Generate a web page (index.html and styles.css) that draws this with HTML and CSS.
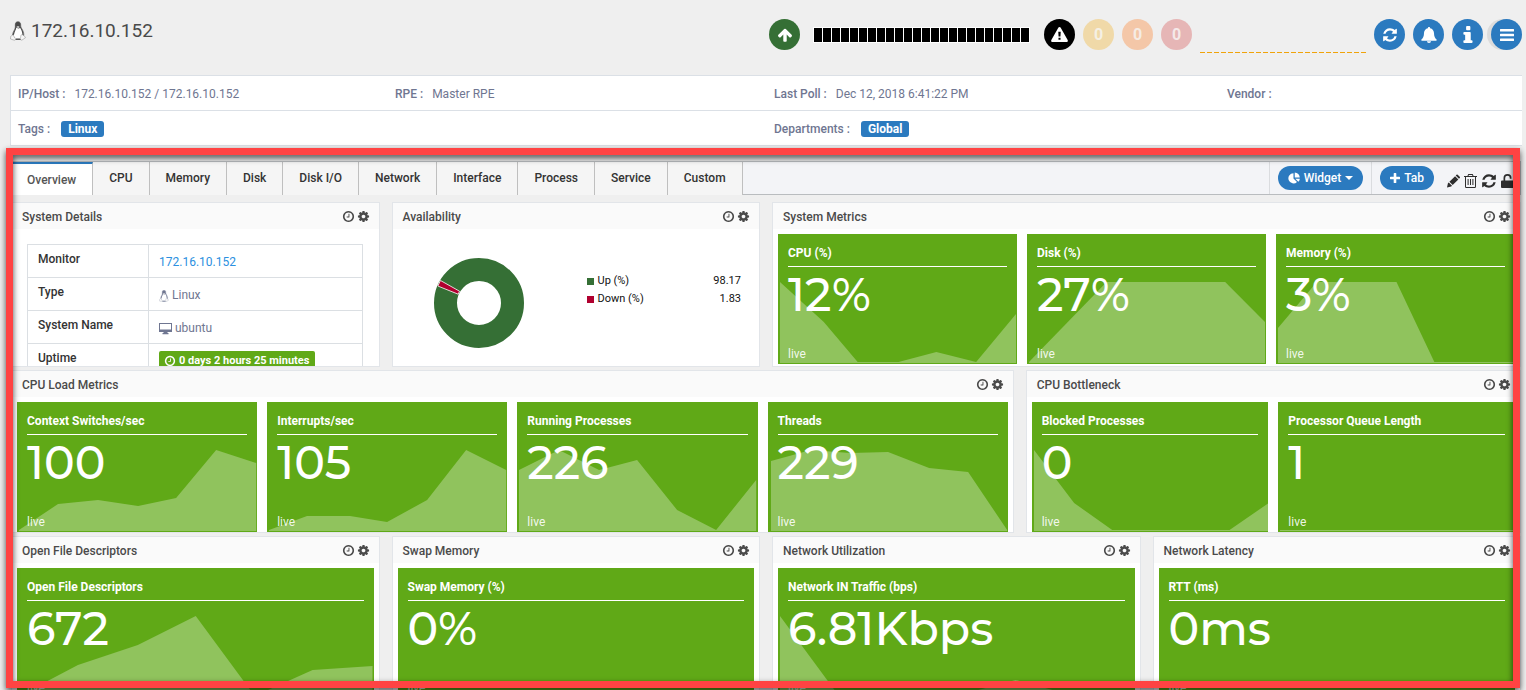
FILE: index.html
```
<!DOCTYPE html>
<html lang="en">
<head>
<meta charset="utf-8">
<title>172.16.10.152</title>
<link rel="stylesheet" href="styles.css">
</head>
<body>
<svg class="sprite" aria-hidden="true">
  <symbol id="clock" viewBox="0 0 1792 1792"><path d="M1024 544v448q0 14-9 23t-23 9h-320q-14 0-23-9t-9-23v-64q0-14 9-23t23-9h224v-352q0-14 9-23t23-9h64q14 0 23 9t9 23zm416 352q0-148-73-273t-198-198-273-73-273 73-198 198-73 273 73 273 198 198 273 73 273-73 198-198 73-273zm224 0q0 209-103 385.500t-279.500 279.500-385.500 103-385.500-103-279.500-279.500-103-385.500 103-385.500 279.500-279.500 385.500-103 385.500 103 279.500 279.500 103 385.500z"/></symbol>
  <symbol id="cog" viewBox="0 0 1792 1792"><path d="M1152 896q0-106-75-181t-181-75-181 75-75 181 75 181 181 75 181-75 75-181zm512-109v222q0 12-8 23t-20 13l-185 28q-19 54-39 91 35 50 107 138 10 12 10 25t-9 23q-27 37-99 108t-94 71q-12 0-26-9l-138-108q-44 23-91 38-16 136-29 186-7 28-36 28h-222q-14 0-24.500-8.500t-11.500-21.500l-28-184q-49-16-90-37l-141 107q-10 9-25 9-14 0-25-11-126-114-165-168-7-10-7-23 0-12 8-23 15-21 51-66.500t54-70.500q-27-50-41-99l-183-27q-13-2-21-12.500t-8-23.500v-222q0-12 8-23t19-13l186-28q14-46 39-92-40-57-107-138-10-12-10-24 0-10 9-23 26-36 98.500-107.500t94.500-71.500q13 0 26 10l138 107q44-23 91-38 16-136 29-186 7-28 36-28h222q14 0 24.500 8.500t11.500 21.500l28 184q49 16 90 37l142-107q9-9 24-9 13 0 25 10 129 119 165 170 7 8 7 22 0 12-8 23-15 21-51 66.500t-54 70.500q26 50 41 98l183 28q13 2 21 12.500t8 23.500z"/></symbol>
  <symbol id="refresh" viewBox="0 0 1792 1792"><path d="M1639 1056q0 5-1 7-64 268-268 434.500t-478 166.500q-146 0-282.500-55t-243.500-157l-129 129q-19 19-45 19t-45-19-19-45v-448q0-26 19-45t45-19h448q26 0 45 19t19 45-19 45l-137 137q71 66 161 102t187 36q134 0 250-65t186-179q11-17 53-117 8-23 30-23h192q13 0 22.500 9.500t9.500 22.500zm25-800v448q0 26-19 45t-45 19h-448q-26 0-45-19t-19-45 19-45l138-138q-148-137-349-137-134 0-250 65t-186 179q-11 17-53 117-8 23-30 23h-199q-13 0-22.500-9.500t-9.500-22.500v-7q65-268 270-434.500t480-166.500q146 0 284 55.500t245 156.500l130-129q19-19 45-19t45 19 19 45z"/></symbol>
  <symbol id="up" viewBox="0 0 1792 1792"><path d="M1675 971q0 51-37 90l-75 75q-38 38-91 38-54 0-90-38l-294-293v704q0 52-37.500 84.500t-90.500 32.500h-128q-53 0-90.500-32.500t-37.500-84.500v-704l-294 293q-36 38-90 38t-90-38l-75-75q-38-38-38-90 0-53 38-91l651-651q35-37 90-37 54 0 91 37l651 651q37 39 37 91z"/></symbol>
  <symbol id="warn" viewBox="0 0 18 16"><path fill-rule="evenodd" d="M9 0c.6 0 1 .3 1.300.8l7.400 13c.6 1.100-.1 2.200-1.200 2.200h-15c-1.100 0-1.800-1.100-1.200-2.200l7.400-13C8 .3 8.400 0 9 0zM7.700 5l.3 5.200h2l.3-5.200zM7.900 11.500v2.100h2.200v-2.100z"/></symbol>
  <symbol id="bell" viewBox="0 0 16 16"><path d="M8 0c.7 0 1.100.5 1.100 1.200 2.400.5 3.900 2.400 3.900 4.900 0 3.400 1 5.300 2.600 6.400.3.800-.2 1.300-.8 1.300H1.200c-.6 0-1.100-.5-.8-1.300C2 11.400 3 9.500 3 6.100c0-2.500 1.500-4.400 3.900-4.900C6.900.5 7.300 0 8 0zM6 14.300h4c0 1-.9 1.700-2 1.700s-2-.7-2-1.700z"/></symbol>
  <symbol id="info" viewBox="0 0 10 18"><path d="M3 1c0-.6.300-1 .9-1h2.700c.6 0 .9.400.9 1v2.400c0 .6-.3 1-.9 1H3.900c-.6 0-.9-.4-.9-1zM1 6.300h6c.6 0 .9.300.9.900v7.800h1c.6 0 .9.400.9 1v1c0 .6-.3 1-.9 1H1c-.6 0-.9-.4-.9-1v-1c0-.6.300-1 .9-1h1V9.300H1c-.6 0-.9-.4-.9-1V7.200c0-.6.300-.9.900-.9z"/></symbol>
  <symbol id="menu" viewBox="0 0 14 12"><path d="M.5 0h13q.5 0 .5.500v1.500q0 .5-.5.500H.5Q0 2.500 0 2V.5Q0 0 .5 0zM.5 4.700h13q.5 0 .5.500v1.500q0 .5-.5.500H.5Q0 7.200 0 6.700V5.200q0-.5.500-.5zM.5 9.500h13q.5 0 .5.500v1.500q0 .5-.5.500H.5Q0 12 0 11.500V10q0-.5.500-.5z"/></symbol>
  <symbol id="pie" viewBox="0 0 16 16"><path d="M7.300 1.800v6.700l4.700 4.700A6.700 6.700 0 1 1 7.300 1.800zM9 .5A6.800 6.800 0 0 1 15.700 7.300H9zM9.700 8.900h6.100a6.700 6.700 0 0 1-2 4.200z"/></symbol>
  <symbol id="plus" viewBox="0 0 10 10"><path d="M3.700.6q0-.6.600-.6h1.400q.6 0 .6.600v3.100h3.100q.6 0 .6.600v1.400q0 .6-.6.600H6.300v3.100q0 .6-.6.600H4.300q-.6 0-.6-.6V6.300H.6Q0 6.300 0 5.700V4.300q0-.6.600-.6h3.100z"/></symbol>
  <symbol id="caret" viewBox="0 0 8 4"><path d="M0 0h8L4 4z"/></symbol>
  <symbol id="pencil" viewBox="0 0 14 14"><path d="M0 14l1-4.500.9-.9 3.500 3.500-.9.900zM2.600 7.900L8.700 1.800l3.500 3.500-6.100 6.100zM9.400 1.100l.8-.8q.7-.6 1.300 0l2.200 2.200q.6.600 0 1.300l-.8.800z"/></symbol>
  <symbol id="trash" viewBox="0 0 13 14"><path fill-rule="evenodd" d="M4.300 0h4.400l.9 2H13v1h-1v9.500q0 1.500-1.300 1.500H2.300Q1 14 1 12.500V3H0V2h3.400zM4.900 1l-.4 1h4l-.4-1zM2 3v9.500q0 .5.500.5h8q.5 0 .5-.5V3zM3.600 5h1v6h-1zM6 5h1v6H6zM8.400 5h1v6h-1z"/></symbol>
  <symbol id="unlock" viewBox="0 0 13 14"><path d="M2.500 6.500V4a4 4 0 0 1 8 0v.8H8.800V4a2.300 2.300 0 0 0-4.600 0v2.500H12q1 0 1 1V13q0 1-1 1H1q-1 0-1-1V7.500q0-1 1-1z"/></symbol>
  <symbol id="tux" viewBox="0 0 16 19"><path d="M5.300 3.500C5.200 1.300 6.300.2 8 .2s2.900 1.200 2.700 3.500c0 2 .9 3.200 1.900 5 1 1.600 1.500 3.500.9 6L11 18H5l-2.500-4.500c.1-2 1.200-3.700 2-5.300.7-1.200.9-2.600.8-4.700z" fill="#fff" stroke="currentColor" stroke-width=".6"/><path d="M5.200 3.500C5.100 1.300 6.300.2 8 .2s2.900 1.200 2.700 3.500l.1 1.800c.6 1.600 2.900 3.900 2.900 8l-1.300.3c.1-3.200-1-5.400-2.200-7.400L8.300 6.900 6.300 6.200C6 8.500 4.300 10.500 4 13.300l-1.300.2c-.1-2.800 2.400-5 2.500-7.500zM5.300 18.300l.8-1.200h3.700l1 1.200z" fill="currentColor"/><path d="M6.200 5.400L8 4.600l1.800.8L8.100 6.600z" fill="#ddd"/><path d="M2.900 13.200l2.700 4.200c.3 1-.6 1.500-1.700 1.200L.5 17.500l.2-2.600zM12.100 13l2.700 1.900.6 1.400-3.200 2.100c-1 .5-1.800.1-1.800-.8l.5-3.900z" fill="#f6f6f6" stroke="currentColor" stroke-width=".5" stroke-opacity=".6"/></symbol>
  <symbol id="screen" viewBox="0 0 13 12"><path fill-rule="evenodd" d="M0 0h13v9H8.500v1h1v1.200h-6V10h1V9H0zM1 1v5.500h11V1z"/></symbol>
</svg>

<div class="page">
  <header class="topbar">
    <h1 class="host"><svg class="tux-lg"><use href="#tux"/></svg>172.16.10.152</h1>
    <div class="status">
      <span class="dot dot-up"><svg class="i16"><use href="#up"/></svg></span>
      <span class="poll-bar"></span>
      <span class="dot dot-alert"><svg class="warn"><use href="#warn"/></svg></span>
      <span class="dot dot-yellow">0</span>
      <span class="dot dot-orange">0</span>
      <span class="dot dot-red">0</span>
      <span class="trend"></span>
      <button class="dot dot-blue" aria-label="Refresh"><svg class="i16"><use href="#refresh"/></svg></button>
      <button class="dot dot-blue" aria-label="Alerts"><svg class="i16"><use href="#bell"/></svg></button>
      <button class="dot dot-blue" aria-label="Information"><svg class="info"><use href="#info"/></svg></button>
      <button class="dot dot-blue dot-menu" aria-label="Menu"><svg class="menu"><use href="#menu"/></svg></button>
    </div>
  </header>

  <section class="details">
    <div class="details-row">
      <div><b>IP/Host :</b><span>172.16.10.152 / 172.16.10.152</span></div>
      <div><b>RPE :</b><span>Master RPE</span></div>
      <div><b>Last Poll :</b><span>Dec 12, 2018 6:41:22 PM</span></div>
      <div><b>Vendor :</b></div>
    </div>
    <div class="details-row">
      <div class="span2"><b>Tags :</b><span class="tag">Linux</span></div>
      <div class="span2"><b>Departments :</b><span class="tag">Global</span></div>
    </div>
  </section>

  <main class="dashboard">
    <nav class="tabs">
      <button class="tab active">Overview</button>
      <button class="tab">CPU</button>
      <button class="tab">Memory</button>
      <button class="tab">Disk</button>
      <button class="tab">Disk I/O</button>
      <button class="tab">Network</button>
      <button class="tab">Interface</button>
      <button class="tab">Process</button>
      <button class="tab">Service</button>
      <button class="tab">Custom</button>
      <div class="tools">
        <div class="tool"><button class="pill"><svg class="i12"><use href="#pie"/></svg>Widget<svg class="caret"><use href="#caret"/></svg></button></div>
        <div class="tool"><button class="pill"><svg class="plus"><use href="#plus"/></svg>Tab</button>
          <div class="tool-icons">
            <button class="icon" aria-label="Edit"><svg class="i14"><use href="#pencil"/></svg></button>
            <button class="icon" aria-label="Delete"><svg class="i14"><use href="#trash"/></svg></button>
            <button class="icon" aria-label="Reload"><svg class="i16"><use href="#refresh"/></svg></button>
            <button class="icon" aria-label="Unlock"><svg class="i14"><use href="#unlock"/></svg></button>
          </div>
        </div>
      </div>
    </nav>

    <div class="grid">
      <section class="widget w3 first-row">
        <header class="widget-head"><h2>System Details</h2><button class="icon" aria-label="Time range"><svg class="i13"><use href="#clock"/></svg></button><button class="icon" aria-label="Settings"><svg class="i13"><use href="#cog"/></svg></button></header>
        <div class="facts-box">
          <table class="facts">
            <tr><th scope="row">Monitor</th><td><a href="#">172.16.10.152</a></td></tr>
            <tr><th scope="row">Type</th><td><svg class="tux-sm"><use href="#tux"/></svg>Linux</td></tr>
            <tr><th scope="row">System Name</th><td><svg class="screen"><use href="#screen"/></svg>ubuntu</td></tr>
            <tr><th scope="row">Uptime</th><td><span class="uptime"><svg class="i12"><use href="#clock"/></svg>0 days 2 hours 25 minutes</span></td></tr>
          </table>
        </div>
      </section>

      <section class="widget w3 first-row">
        <header class="widget-head"><h2>Availability</h2><button class="icon" aria-label="Time range"><svg class="i13"><use href="#clock"/></svg></button><button class="icon" aria-label="Settings"><svg class="i13"><use href="#cog"/></svg></button></header>
        <div class="availability">
          <svg class="donut" viewBox="0 0 90 90"><circle cx="45" cy="45" r="33.500" fill="none" stroke="#356f35" stroke-width="23"/><path d="M6.500 22.500L25.500 33.200 24.200 36.200 3.800 28z" fill="#b0002f" stroke="#fff" stroke-width=".8"/></svg>
          <ul class="legend">
            <li><i class="key key-up"></i>Up (%)<span>98.17</span></li>
            <li><i class="key key-down"></i>Down (%)<span>1.83</span></li>
          </ul>
        </div>
      </section>

      <section class="widget w6 first-row">
        <header class="widget-head"><h2>System Metrics</h2><button class="icon" aria-label="Time range"><svg class="i13"><use href="#clock"/></svg></button><button class="icon" aria-label="Settings"><svg class="i13"><use href="#cog"/></svg></button></header>
        <div class="tiles">
          <article class="tile"><svg class="chart" viewBox="0 0 240 130" preserveAspectRatio="none"><path d="M2 129V48L46 88 80 128H121L159 118 199 128 239 80V129z"/></svg><h3>CPU (%)</h3><p class="value">12%</p><p class="live">live</p></article>
          <article class="tile"><svg class="chart" viewBox="0 0 240 130" preserveAspectRatio="none"><path d="M2 129V128L80 48H199L239 88V129z"/></svg><h3>Disk (%)</h3><p class="value">27%</p><p class="live">live</p></article>
          <article class="tile"><svg class="chart" viewBox="0 0 240 130" preserveAspectRatio="none"><path d="M2 129V94L41 48H121L159 128H239V129z"/></svg><h3>Memory (%)</h3><p class="value">3%</p><p class="live">live</p></article>
        </div>
      </section>

      <section class="widget w8">
        <header class="widget-head"><h2>CPU Load Metrics</h2><button class="icon" aria-label="Time range"><svg class="i13"><use href="#clock"/></svg></button><button class="icon" aria-label="Settings"><svg class="i13"><use href="#cog"/></svg></button></header>
        <div class="tiles">
          <article class="tile"><svg class="chart" viewBox="0 0 240 130" preserveAspectRatio="none"><path d="M2 129V128L41 102 81 98 121 104 159 96 199 48 239 61V129z"/></svg><h3>Context Switches/sec</h3><p class="value">100</p><p class="live">live</p></article>
          <article class="tile"><svg class="chart" viewBox="0 0 240 130" preserveAspectRatio="none"><path d="M2 129V128L40 114H83L120 120 160 98 199 48 239 68V129z"/></svg><h3>Interrupts/sec</h3><p class="value">105</p><p class="live">live</p></article>
          <article class="tile"><svg class="chart" viewBox="0 0 240 130" preserveAspectRatio="none"><path d="M2 129V68L42 48 82 68 120 58 160 108 199 128 239 78V129z"/></svg><h3>Running Processes</h3><p class="value">226</p><p class="live">live</p></article>
          <article class="tile"><svg class="chart" viewBox="0 0 240 130" preserveAspectRatio="none"><path d="M3 129V59L43 48 82 51 120 50 161 66 200 70 239 128V129z"/></svg><h3>Threads</h3><p class="value">229</p><p class="live">live</p></article>
        </div>
      </section>

      <section class="widget w4">
        <header class="widget-head"><h2>CPU Bottleneck</h2><button class="icon" aria-label="Time range"><svg class="i13"><use href="#clock"/></svg></button><button class="icon" aria-label="Settings"><svg class="i13"><use href="#cog"/></svg></button></header>
        <div class="tiles">
          <article class="tile"><svg class="chart" viewBox="0 0 236 130" preserveAspectRatio="none"><path d="M2 129V48L42 101 80 128H197L236 101V129z"/></svg><h3>Blocked Processes</h3><p class="value">0</p><p class="live">live</p></article>
          <article class="tile"><svg class="chart" viewBox="0 0 236 130" preserveAspectRatio="none"><path d="M2 128H235V129H2z"/></svg><h3>Processor Queue Length</h3><p class="value">1</p><p class="live">live</p></article>
        </div>
      </section>

      <section class="widget w3">
        <header class="widget-head"><h2>Open File Descriptors</h2><button class="icon" aria-label="Time range"><svg class="i13"><use href="#clock"/></svg></button><button class="icon" aria-label="Settings"><svg class="i13"><use href="#cog"/></svg></button></header>
        <div class="tiles">
          <article class="tile"><svg class="chart" viewBox="0 0 357 130" preserveAspectRatio="none"><path d="M2 129V128L61 97 121 77 179 48 238 128 296 102 356 98V129z"/></svg><h3>Open File Descriptors</h3><p class="value">672</p><p class="live">live</p></article>
        </div>
      </section>
      <section class="widget w3">
        <header class="widget-head"><h2>Swap Memory</h2><button class="icon" aria-label="Time range"><svg class="i13"><use href="#clock"/></svg></button><button class="icon" aria-label="Settings"><svg class="i13"><use href="#cog"/></svg></button></header>
        <div class="tiles">
          <article class="tile"><svg class="chart" viewBox="0 0 357 130" preserveAspectRatio="none"><path d="M2 128H356V129H2z"/></svg><h3>Swap Memory (%)</h3><p class="value">0%</p><p class="live">live</p></article>
        </div>
      </section>
      <section class="widget w3">
        <header class="widget-head"><h2>Network Utilization</h2><button class="icon" aria-label="Time range"><svg class="i13"><use href="#clock"/></svg></button><button class="icon" aria-label="Settings"><svg class="i13"><use href="#cog"/></svg></button></header>
        <div class="tiles">
          <article class="tile"><svg class="chart" viewBox="0 0 357 130" preserveAspectRatio="none"><path d="M2 129V48L61 128H178L238 112 297 128H356V129z"/></svg><h3>Network IN Traffic (bps)</h3><p class="value">6.81Kbps</p><p class="live">live</p></article>
        </div>
      </section>
      <section class="widget w3">
        <header class="widget-head"><h2>Network Latency</h2><button class="icon" aria-label="Time range"><svg class="i13"><use href="#clock"/></svg></button><button class="icon" aria-label="Settings"><svg class="i13"><use href="#cog"/></svg></button></header>
        <div class="tiles">
          <article class="tile"><svg class="chart" viewBox="0 0 357 130" preserveAspectRatio="none"><path d="M2 128H356V129H2z"/></svg><h3>RTT (ms)</h3><p class="value">0ms</p><p class="live">live</p></article>
        </div>
      </section>
    </div>
    <div class="callout"></div>
  </main>
</div>
</body>
</html>
```
FILE: styles.css
```
* { box-sizing: border-box; }
body {
  margin: 0;
  background: #efefef;
  color: #6f7691;
  font: 12px/18px Roboto, "Liberation Sans", sans-serif;
}
h1, h2, h3, p, ul { margin: 0; padding: 0; }
button { font: inherit; border: 0; padding: 0; background: none; cursor: pointer; }
svg { fill: currentColor; display: block; flex: none; }
b { font-weight: 500; }
.sprite { display: none; }

.i12 { width: 12px; height: 12px; }
.i13 { width: 13px; height: 13px; }
.i14 { width: 13px; height: 14px; }
.i16 { width: 16px; height: 16px; }

.page {
  height: 100vh;
  display: flex;
  flex-direction: column;
  overflow: hidden;
}

.topbar {
  display: flex;
  justify-content: space-between;
  align-items: flex-start;
  padding: 19px 4px 25px 10px;
}
.host {
  display: flex;
  align-items: center;
  gap: 5px;
  font-size: 19px;
  line-height: 24px;
  font-weight: 400;
  color: #4a4a4a;
}
.tux-lg { width: 16px; height: 20px; }
.status { display: flex; align-items: center; gap: 8px; }
.dot {
  width: 31px;
  height: 31px;
  border-radius: 50%;
  display: flex;
  align-items: center;
  justify-content: center;
  color: #fff;
  font-size: 16px;
  font-weight: 700;
}
.dot-up { background: #356f35; }
.dot-alert { background: #000; }
.dot-yellow { background: #f0d9a8; color: #f5f0e4; }
.dot-orange { background: #f4c7a8; color: #f6ece4; }
.dot-red { background: #e6b6b6; color: #f5e9e9; }
.dot-blue { background: #2b7abf; }
.dot-menu { box-shadow: -4px 0 0 #dcdcdc; }
.warn { width: 17px; height: 15px; }
.info { width: 10px; height: 17px; }
.menu { width: 14px; height: 12px; }
.poll-bar {
  width: 217px;
  height: 16px;
  margin: 0 6px 0 5px;
  border: 1px solid #fff;
  background: repeating-linear-gradient(90deg, #000 0 8px, #fff 8px 9px);
}
.trend {
  width: 166px;
  height: 1px;
  align-self: flex-end;
  margin-bottom: -3px;
  background: repeating-linear-gradient(90deg, #f0a30a 0 5px, transparent 5px 7px);
}

.details {
  margin: 0 4px 0 10px;
  border: 1px solid #dbe0e6;
  border-right: 0;
  background: #fff;
}
.details-row {
  display: grid;
  grid-template-columns: 377fr 379fr 453fr 295fr;
  padding: 9px 0 7px 7px;
}
.details-row + .details-row { border-top: 1px solid #dbe0e6; }
.details-row > div { display: flex; align-items: center; gap: 9px; }
.span2 { grid-column: span 2; }
.tag {
  margin-left: 2px;
  padding: 0 7px;
  border-radius: 3px;
  background: #2b7abf;
  color: #fff;
  font-weight: 700;
  line-height: 16px;
}

.dashboard {
  position: relative;
  flex: 1;
  min-height: 0;
  padding: 15px 5px 0 11px;
}
.callout {
  position: absolute;
  inset: 2px 6px 2px 6px;
  border: 7px solid #ff4343;
  filter: drop-shadow(0 3px 3px rgba(0, 0, 0, .7));
  pointer-events: none;
}

.tabs {
  display: flex;
  height: 34px;
  border-top: 1px solid #b9bcbf;
}
.tab {
  padding: 0 16px 2px;
  border-right: 1px solid #bfbfbf;
  background: #f5f5f5;
  color: #333;
  font-weight: 500;
}
.tab.active {
  padding-top: 1px;
  padding-bottom: 0;
  border-top: 2px solid #2b7abf;
  background: #fff;
  color: #555;
}
.tools {
  flex: 1;
  display: flex;
  justify-content: flex-end;
  background: #f3f4f7;
  border-bottom: 1px solid #b9bcbf;
  border-right: 1px solid #b9bcbf;
}
.tool {
  display: flex;
  align-items: center;
  padding: 0 8px;
  border-left: 1px solid #dadcdf;
}
.tool:last-child { padding-right: 6px; }
.pill {
  display: flex;
  align-items: center;
  gap: 4px;
  height: 24px;
  padding: 0 10px;
  border-radius: 12px;
  background: #2b7abf;
  color: #fff;
  font-weight: 500;
}
.plus { width: 10px; height: 10px; }
.caret { width: 8px; height: 4px; }
.tool-icons { display: flex; align-items: center; gap: 4px; padding: 6px 0 0 13px; }
.icon { display: flex; color: #4a4a4a; }
.tool-icons .icon { color: #2e2e2e; }

.grid {
  display: grid;
  grid-template-columns: repeat(12, minmax(0, 1fr));
  gap: 3px 12px;
  padding-top: 7px;
}
.widget {
  display: flex;
  flex-direction: column;
  background: #fff;
  border: 1px solid #e2e5e9;
  min-width: 0;
  height: 163px;
}
.first-row { height: 165px; }
.w3 { grid-column: span 3; }
.w4 { grid-column: span 4; }
.w6 { grid-column: span 6; }
.w8 { grid-column: span 8; }
.widget-head {
  display: flex;
  align-items: center;
  gap: 2px;
  flex: none;
  height: 26px;
  padding: 1px 9px 0 10px;
  background: #fafafa;
  color: #4a4a4a;
}
.widget-head h2 { flex: 1; font-size: 12px; font-weight: 500; line-height: 20px; }

.facts-box { overflow: hidden; padding: 15px 16px 0 15px; }
.facts { width: 100%; border-collapse: collapse; table-layout: fixed; }
.facts th, .facts td { height: 33px; border: 1px solid #dbdfe3; padding: 0 10px; text-align: left; }
.facts th { width: 121px; padding-bottom: 4px; color: #333; font-weight: 500; }
.facts td { padding-top: 2px; white-space: nowrap; }
.facts td svg { display: inline-block; vertical-align: middle; margin-right: 3px; }
.facts a { color: #2b90e0; text-decoration: none; }
.tux-sm { width: 10px; height: 12px; }
.screen { width: 13px; height: 12px; }
.uptime {
  display: inline-block;
  padding: 0 6px 0 5px;
  border-radius: 2px;
  background: #60a917;
  color: #fff;
  font-size: 11px;
  font-weight: 700;
  line-height: 20px;
}

.availability { display: flex; align-items: flex-start; padding: 29px 18px 0 41px; color: #111; }
.donut { width: 90px; height: 90px; }
.legend { flex: 1; margin: 14px 0 0 63px; list-style: none; font-size: 11px; }
.legend li { display: flex; align-items: center; gap: 4px; }
.legend span { margin-left: auto; }
.key { width: 7px; height: 7px; }
.key-up { background: #356f35; }
.key-down { background: #b0002f; }

.tiles { display: flex; gap: 10px; padding: 5px 5px 0; }
.tile {
  position: relative;
  flex: 1 1 0;
  min-width: 0;
  height: 130px;
  display: flex;
  flex-direction: column;
  padding: 10px 10px 1px;
  background: #60a917;
  color: #fff;
}
.chart { position: absolute; inset: 0; width: 100%; height: 100%; color: rgba(255, 255, 255, .3); }
.tile h3, .value, .live { position: relative; }
.tile h3 { font-size: 12px; font-weight: 700; padding-bottom: 4px; border-bottom: 1px solid #fff; }
.value {
  font-family: Montserrat, Inter, sans-serif;
  font-size: 46px;
  line-height: 56px;
  font-weight: 500;
  white-space: nowrap;
}
.live { margin-top: auto; color: rgba(255, 255, 255, .9); }
```
